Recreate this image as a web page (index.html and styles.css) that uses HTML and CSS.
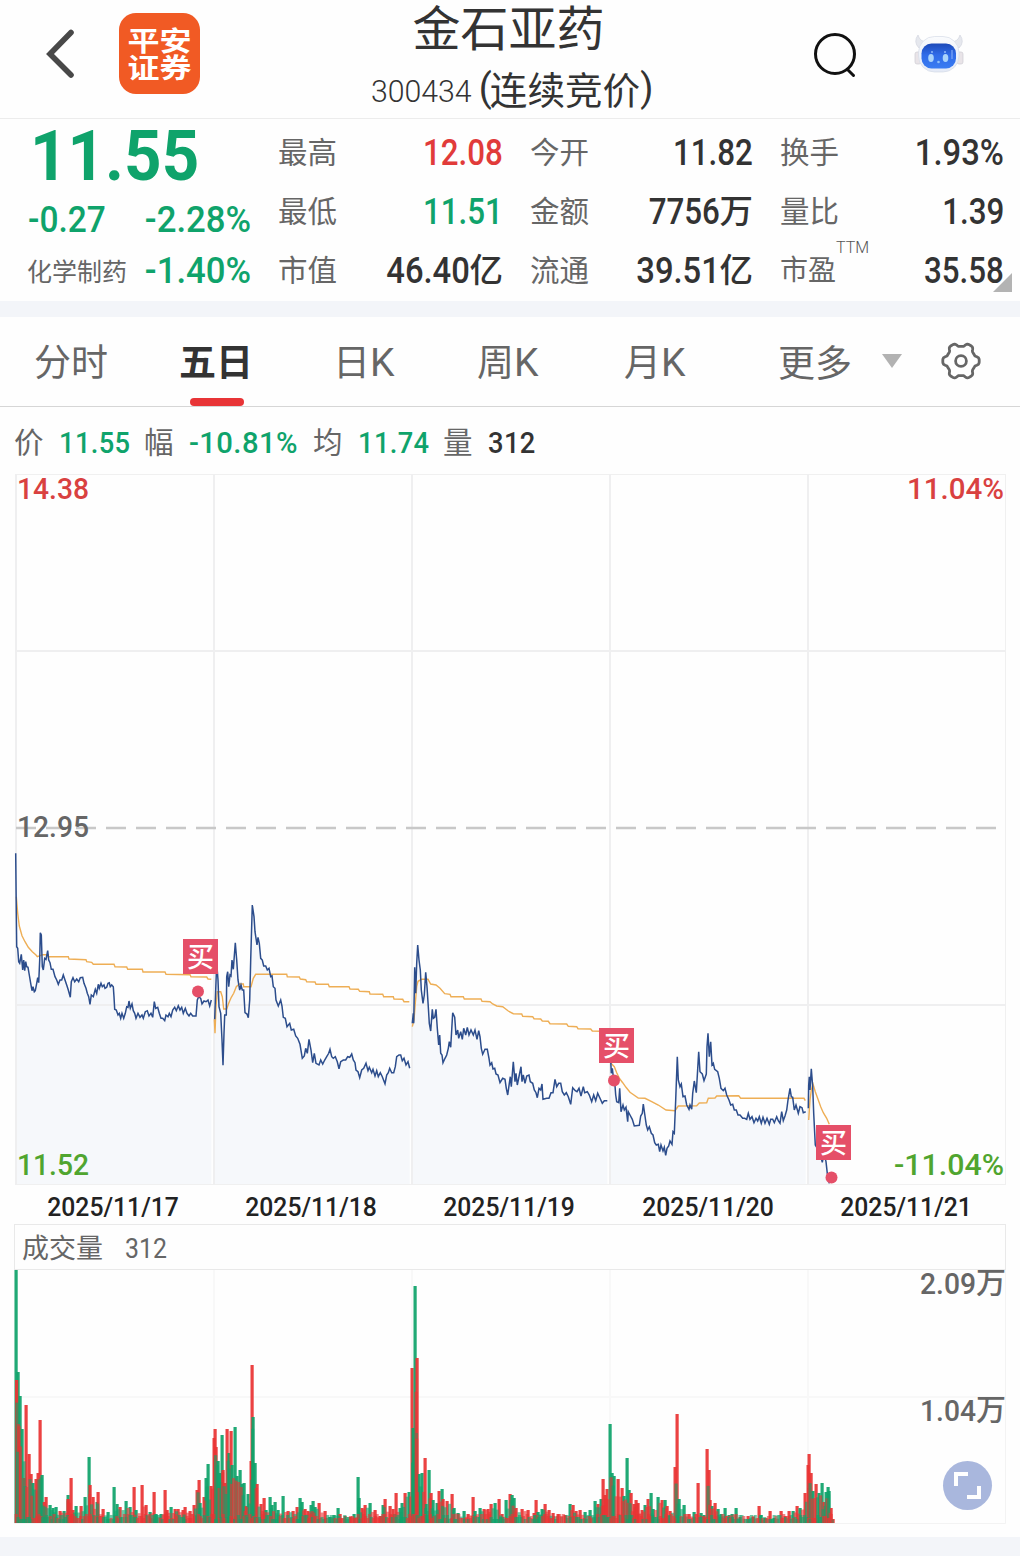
FILE: index.html
```html
<!DOCTYPE html>
<html lang="zh-CN">
<head>
<meta charset="utf-8">
<title>金石亚药 300434</title>
<link rel="stylesheet" href="styles.css">
</head>
<body>
<header class="topbar">
  <div class="topbar-left">
    <svg class="back" width="30" height="52" viewBox="0 0 30 52"><path d="M25 5.500 4 27 25 48" fill="none" stroke="#484848" stroke-width="5.600" stroke-linecap="round" stroke-linejoin="miter"/></svg>
    <div class="logo"><span>平安</span><span>证券</span></div>
  </div>
  <div class="stock">
    <h1>金石亚药</h1>
    <div class="code"><span class="digits">300434</span><span class="paren">(</span><span class="phase">连续竞价</span><span class="paren">)</span></div>
  </div>
  <div class="topbar-right">
    <svg width="44" height="46" viewBox="0 0 44 46" fill="none" stroke="#111" stroke-width="3"><circle cx="22" cy="22" r="19.500"/><path d="m34.500 37.500 6 6" stroke-linecap="round"/></svg>
    <svg class="robot" width="50" height="40" viewBox="0 0 50 40">
      <defs>
        <linearGradient id="face" x1="0" y1="0" x2="0" y2="1"><stop offset="0" stop-color="#1c49b8"/><stop offset=".45" stop-color="#2f6be8"/><stop offset="1" stop-color="#3a7cf2"/></linearGradient>
        <linearGradient id="shell" x1="0" y1="0" x2="0" y2="1"><stop offset="0" stop-color="#fafbfd"/><stop offset="1" stop-color="#e4eaf6"/></linearGradient>
      </defs>
      <path d="M4 1q-5 7 1 13l8-6Q6 8 4 1ZM46 1q5 7-1 13l-8-6q7 0 9-7Z" fill="#e6e8ee" stroke="#d3d6df" stroke-width=".7"/>
      <rect x="1" y="18" width="6" height="12" rx="2" fill="#e9e4e8" stroke="#cfcdd4" stroke-width=".7"/>
      <rect x="43" y="18" width="6" height="12" rx="2" fill="#e9e4e8" stroke="#cfcdd4" stroke-width=".7"/>
      <rect x="4.500" y="2.500" width="40.500" height="35.500" rx="16" fill="url(#shell)" stroke="#d6dbe7" stroke-width=".7"/>
      <rect x="7.500" y="9.500" width="34.500" height="25" rx="10" fill="url(#face)"/>
      <ellipse cx="17" cy="24" rx="2.800" ry="4" fill="#a9d3fb"/><ellipse cx="31.500" cy="24" rx="2.800" ry="4" fill="#a9d3fb"/>
      <circle cx="18" cy="18" r="1" fill="#8fb9f8"/><circle cx="31" cy="18" r="1" fill="#8fb9f8"/>
      <circle cx="24.500" cy="28" r="1.300" fill="#8fc1f8"/>
      <path d="M38 16v9" stroke="#6f9df5" stroke-width="1.500"/>
    </svg>
  </div>
</header>

<section class="quote">
  <div class="main">
    <div class="price green"><span class="num left">11.55</span></div>
    <div class="change green"><span class="num left">-0.27</span><span class="num right">-2.28%</span></div>
    <div class="change green"><span class="sector">化学制药</span><span class="num right">-1.40%</span></div>
  </div>
  <dl class="stats">
    <div><dt>最高</dt><dd class="red"><span class="num right">12.08</span></dd></div>
    <div><dt>今开</dt><dd><span class="num right">11.82</span></dd></div>
    <div><dt>换手</dt><dd><span class="num right wide">1.93%</span></dd></div>
    <div><dt>最低</dt><dd class="green"><span class="num right">11.51</span></dd></div>
    <div><dt>金额</dt><dd><span class="num right">7756</span><b>万</b></dd></div>
    <div><dt>量比</dt><dd><span class="num right">1.39</span></dd></div>
    <div><dt>市值</dt><dd><span class="num right wide">46.40</span><b>亿</b></dd></div>
    <div><dt>流通</dt><dd><span class="num right wide">39.51</span><b>亿</b></dd></div>
    <div class="pe"><dt>市盈<sup>TTM</sup></dt><dd><span class="num right">35.58</span></dd></div>
  </dl>
  <i class="corner"></i>
</section>

<nav class="tabs">
  <a class="tab">分时</a>
  <a class="tab active">五日</a>
  <a class="tab">日<span>K</span></a>
  <a class="tab">周<span>K</span></a>
  <a class="tab">月<span>K</span></a>
  <a class="tab more">更多<i></i></a>
  <svg class="gear" width="40" height="40" viewBox="-20 -20 40 40" fill="none" stroke="#666" stroke-width="2.800" stroke-linejoin="round"><path id="gear"/><circle r="5.400"/></svg>
</nav>

<div class="legend">
  <span class="key">价</span><span class="val v1 green"><span class="num left">11.55</span></span>
  <span class="key">幅</span><span class="val v2 green"><span class="num left">-10.81%</span></span>
  <span class="key">均</span><span class="val v3 green"><span class="num left">11.74</span></span>
  <span class="key">量</span><span class="val"><span class="num left">312</span></span>
</div>

<svg class="chart" id="chart" width="1020" height="711" viewBox="0 474 1020 711">
  <g id="areas" fill="#f6f8fb"></g>
  <path d="M15 474.500H1006M15 1184.500H1006M1005.500 474V1185" stroke="#f0f0f0"/>
  <path d="M15 651H1006M15 1005H1006M16 474V1185M214 474V1185M412 474V1185M610 474V1185M808 474V1185" stroke="#efeff0" stroke-width="2"/>
  <path d="M16 828H1000" stroke="#c8c8c8" stroke-width="2.300" stroke-dasharray="20 10"/>
  <g id="lines" fill="none"></g>
  <g class="axis">
    <text x="17" y="499" textLength="72" lengthAdjust="spacingAndGlyphs" class="up">14.38</text>
    <text x="907" y="499" textLength="97" lengthAdjust="spacingAndGlyphs" class="up">11.04%</text>
    <text x="17" y="837" textLength="72" lengthAdjust="spacingAndGlyphs" class="mid">12.95</text>
    <text x="17" y="1175" textLength="72" lengthAdjust="spacingAndGlyphs" class="down">11.52</text>
    <text x="894" y="1175" textLength="110" lengthAdjust="spacingAndGlyphs" class="down">-11.04%</text>
  </g>
  <g id="trades"></g>
</svg>

<div class="dates"><span>2025/11/17</span><span>2025/11/18</span><span>2025/11/19</span><span>2025/11/20</span><span>2025/11/21</span></div>

<section class="volume">
  <div class="volume-head"><span>成交量</span><span class="count">312</span></div>
  <svg class="chart" width="1020" height="254" viewBox="0 1270 1020 254">
    <path d="M15 1397H1006M214 1270V1523M412 1270V1523M610 1270V1523M808 1270V1523" stroke="#f8f8f8" stroke-width="2"/>
    <path d="M14.500 1270V1523.500H1005.500V1270" fill="none" stroke="#f3f3f3"/>
    <g id="bars"></g>
    <g class="axis">
      <text x="920" y="1294" textLength="56" lengthAdjust="spacingAndGlyphs" class="mid">2.09</text><text x="976" y="1293" class="unit">万</text>
      <text x="920" y="1421" textLength="56" lengthAdjust="spacingAndGlyphs" class="mid">1.04</text><text x="976" y="1420" class="unit">万</text>
    </g>
    <circle cx="967.500" cy="1485.500" r="24.500" fill="#a9b7dd"/>
    <path d="M956 1486v-12h12M979 1486v11h-12" fill="none" stroke="#fff" stroke-width="4"/>
  </svg>
</section>
<footer class="band"></footer>
<script src="chart.js"></script>
</body>
</html>
```
FILE: styles.css
```css
* { box-sizing: border-box; }
body { margin: 0; width: 1020px; height: 1556px; overflow: hidden; display: flex; flex-direction: column; background: #fefefe; color: #333; font-family: Roboto, "Noto Sans CJK SC", sans-serif; }
.green { color: #0fa36b !important; }
.red { color: #e13b3a !important; }
.num { display: inline-block; white-space: nowrap; transform: scaleX(.87); }
.wide { transform: scaleX(.91); }
.left { transform-origin: left; }
.right { transform-origin: right; }

.topbar { height: 119px; flex: none; display: grid; grid-template-columns: 340px 340px 340px; border-bottom: 1px solid #ececec; }
.topbar-left { display: flex; align-items: flex-start; padding: 13px 0 0 46px; }
.back { margin: 14px 43px 0 0; }
.logo { width: 81px; height: 81px; border-radius: 17px; background: #f15a24; color: #fff; display: flex; flex-direction: column; align-items: center; justify-content: center; font: 700 32px/27px "Noto Sans CJK SC", sans-serif; padding-bottom: 2px; }
.logo span { height: 27px; transform: scaleY(.86); }
.stock { display: flex; flex-direction: column; align-items: center; }
h1 { margin: -2px 0 0 -3px; font: 400 48px/54px "Noto Sans CJK SC", sans-serif; white-space: nowrap; }
.code { display: flex; align-items: center; height: 60px; margin: 8px 0 0 2px; }
.digits { font-size: 32px; font-weight: 300; width: 108px; transform: scaleX(.945); transform-origin: left; margin-top: 1px; }
.paren { font-size: 38px; width: 11px; text-align: center; margin-top: -4px; }
.phase { font: 400 37.600px/60px "Noto Sans CJK SC", sans-serif; margin-top: -4px; }
.topbar-right { display: flex; align-items: flex-start; gap: 57px; padding: 32px 0 0 133px; }
.robot { margin-top: 2px; }

.quote { position: relative; height: 182px; flex: none; display: flex; padding: 4px 16px 0 28px; }
.main { width: 250px; display: flex; flex-direction: column; }
.price { height: 66px; font: 700 70px/66px Roboto; padding-left: 2px; }
.price .num { transform: scaleX(.935); }
.change { height: 48px; width: 223px; display: flex; justify-content: space-between; align-items: center; font-size: 36px; line-height: 48px; font-weight: 500; }
.change .left { transform: scaleX(.93); }
.change .right { transform: scaleX(.965); }
.price + .change { height: 58px; padding-top: 3px; }
.sector { font: 400 25px/40px "Noto Sans CJK SC", sans-serif; color: #666; margin: -3px 0 0 -1px; }
.stats { margin: 0; flex: 1; display: grid; grid-template-columns: 225px 223px 224px; column-gap: 27px; grid-auto-rows: 59px; }
.stats > div { display: flex; justify-content: space-between; align-items: center; }
dt { position: relative; font: 400 29.500px/40px "Noto Sans CJK SC", sans-serif; color: #666; margin-top: -6px; }
dd { margin: 0; display: flex; align-items: center; font-size: 36px; font-weight: 500; height: 59px; color: #333; }
dd b { font: 500 33.500px/40px "Noto Sans CJK SC", sans-serif; margin-top: -6px; }
.pe dt { font-size: 28px; }
sup { position: absolute; left: 56px; top: -10px; font: 300 16px/20px Roboto; color: #555; }
.corner { position: absolute; right: 8px; bottom: 9px; border-left: 19px solid transparent; border-bottom: 19px solid #b3b3b3; }

.tabs { height: 106px; flex: none; border-top: 16px solid #f3f5f9; border-bottom: 1px solid #d6d6d6; display: flex; font: 400 37px/86px "Noto Sans CJK SC", sans-serif; color: #666; padding-left: 34px; }
.tab { position: relative; width: 144px; white-space: nowrap; }
.tab:nth-child(1) { width: 145px; }
.tab:nth-child(2) { width: 154px; }
.tab:nth-child(4) { width: 147px; }
.tab:nth-child(5) { width: 154px; }
.tab span { font: 400 39px/86px Roboto; }
.tab.active { font-weight: 700; color: #333; }
.tab.active::after { content: ""; position: absolute; left: 11px; bottom: 0; width: 54px; height: 8px; border-radius: 4px; background: #e83436; }
.tab.more { display: flex; align-items: center; gap: 30px; width: 163px; height: 87px; }
.more i { border: 10.500px solid transparent; border-top: 14px solid #b2b2b2; border-bottom: 0; }
.gear { margin-top: 24px; }

.legend { height: 67px; flex: none; display: flex; align-items: center; padding: 3px 0 0 14px; }
.key { font: 400 29.500px/40px "Noto Sans CJK SC", sans-serif; color: #666; margin-top: -4px; width: 45px; }
.val { font-size: 30px; font-weight: 500; letter-spacing: .4px; width: 85px; }
.val .num { transform: scaleX(.91); }
.v2 { width: 124px; }
.v2 .num { transform: scaleX(.975); }

.chart { display: block; flex: none; overflow: visible; }
.axis text { font: 500 30px Roboto; }
.axis .up { fill: #d94140; }
.axis .mid { fill: #666; }
.axis .down { fill: #50a52f; }
.axis .unit { font: 500 30px "Noto Sans CJK SC", sans-serif; fill: #666; }
.mark { font: 500 27px "Noto Sans CJK SC", sans-serif; fill: #fff; }
.dates { height: 39px; flex: none; display: grid; grid-template-columns: repeat(5, 198.200px); margin-left: 14px; font: 500 26px/44px Roboto; color: #222; text-align: center; }
.dates span { transform: scaleX(.95); }
.volume { flex: none; }
.volume-head { height: 46px; margin: 0 14px; border: 1px solid #e9e9e9; display: flex; align-items: center; gap: 22px; padding: 0 0 0 7px; color: #666; font: 400 27px/40px "Noto Sans CJK SC", sans-serif; }
.count { font: 400 27px/40px Roboto; transform: scaleX(.92); transform-origin: left; margin-top: 3px; }
.band { margin-top: 13px; flex: 1; background: #f3f5f9; }
```
FILE: chart.js
```javascript
const NS = 'http://www.w3.org/2000/svg';
function add(parent, tag, attrs, text) {
  const el = document.createElementNS(NS, tag);
  for (const k in attrs) el.setAttribute(k, attrs[k]);
  if (text) el.textContent = text;
  document.getElementById(parent).appendChild(el);
}

// Each session: origin of its grid and samples in thirds of a pixel.
const sessions = [
  { x: 0, y: 800,
    price: '47,160 49,340 50,440 53,445 56,485 59,490 64,463 68,510 71,480 74,512 77,485 80,500 84,502 88,525 92,550 96,572 99,560 103,575 106,572 110,550 113,533 116,548 119,480 121,398 124,405 127,500 130,510 134,475 138,478 143,452 146,480 150,488 154,508 159,508 165,530 170,540 175,553 180,540 185,540 190,525 195,540 200,555 205,570 211,592 214,545 219,533 224,545 230,537 236,545 241,533 248,532 252,550 258,565 262,580 266,590 270,613 274,585 280,590 286,568 290,580 295,553 298,565 303,550 307,560 312,555 315,565 320,562 324,550 328,548 331,560 335,555 340,560 342,590 344,628 349,630 354,645 358,640 362,655 366,640 371,655 376,640 380,620 384,622 387,603 391,625 396,612 400,632 404,640 408,655 414,640 420,652 426,645 430,655 436,635 442,632 447,648 453,640 458,652 463,605 467,625 473,622 478,640 483,655 488,655 494,662 498,645 504,650 508,640 513,650 518,630 524,622 529,632 535,617 540,630 545,622 550,640 556,625 561,640 567,648 572,640 578,648 588,648 592,600 596,590 602,595 606,612 612,603 618,605 624,600 629,618 634,600',
    avg: '49,290 53,340 58,378 66,407 75,425 85,442 97,455 108,465 112,470 128,464 145,464 145,470 205,470 207,477 258,479 260,485 275,487 280,493 342,493 345,500 380,501 383,508 427,508 429,516 495,516 498,523 570,524 573,530 620,531 624,537 634,538' },
  { x: 200, y: 880,
    price: '44,418 47,330 50,248 54,300 57,380 62,400 66,480 69,556 72,460 74,405 79,405 80,290 83,275 86,320 90,285 93,288 96,240 100,268 106,188 110,240 114,300 119,330 123,315 127,330 131,330 135,398 141,402 145,413 149,360 152,240 157,75 162,110 165,155 171,195 174,172 178,190 182,235 187,240 191,258 197,258 202,270 207,265 212,290 216,288 220,320 225,325 228,360 235,378 242,360 246,378 250,412 256,415 261,440 269,430 274,450 281,448 287,468 293,475 300,493 307,535 313,528 317,505 322,520 327,478 333,510 338,548 343,520 348,550 357,555 362,540 368,552 374,540 380,530 386,520 390,508 395,530 400,535 406,530 412,545 417,566 422,545 430,540 437,540 443,530 449,532 455,522 460,540 465,548 468,570 474,575 479,593 485,570 491,565 498,550 504,572 508,562 515,578 519,568 525,588 530,572 535,590 541,578 547,590 555,611 560,585 565,578 569,565 575,578 581,578 586,560 590,530 597,525 602,525 607,542 612,535 618,555 624,545 629,565',
    avg: '43,418 45,460 48,380 52,335 62,335 67,350 71,387 80,387 86,370 94,352 101,340 109,320 118,312 130,312 131,320 153,320 160,295 167,283 260,283 262,290 298,291 301,297 317,299 320,305 345,306 348,313 385,313 388,320 447,320 450,327 475,328 479,334 508,335 510,342 548,343 551,350 580,350 582,357 608,358 612,365 628,365' },
  { x: 400, y: 920,
    price: '37,310 40,280 41,310 44,142 47,220 50,130 53,75 57,120 61,150 64,210 69,250 73,225 77,157 81,200 85,260 88,310 92,333 97,268 100,295 104,292 108,268 112,325 116,375 119,345 122,400 126,405 129,428 135,415 140,405 145,385 148,365 152,382 155,330 158,278 164,292 168,345 173,330 176,355 182,335 187,358 191,325 197,345 202,322 207,345 213,330 220,345 225,330 231,358 236,332 240,350 244,385 248,403 255,388 262,388 267,415 270,435 275,428 279,447 284,445 288,462 294,465 300,488 308,475 315,478 319,505 323,525 328,490 331,470 334,500 340,425 345,485 348,460 352,495 358,465 363,440 366,485 370,465 375,490 380,468 387,465 391,485 398,490 403,510 408,518 412,533 417,505 422,510 426,492 429,538 440,535 447,535 453,518 459,518 465,478 470,500 476,490 482,490 487,515 493,525 499,518 505,530 512,553 518,503 526,512 531,515 537,505 543,528 550,500 554,518 562,515 568,525 575,545 581,525 587,542 593,520 600,535 607,550 613,542 622,542',
    avg: '37,320 42,300 46,250 50,200 54,184 65,178 84,178 92,192 108,195 120,205 134,221 150,223 153,230 190,230 193,237 243,237 246,244 270,245 278,252 290,258 308,260 325,273 340,281 365,282 368,289 398,290 402,296 422,297 427,303 445,304 450,311 500,312 505,319 530,320 534,326 572,327 577,333 610,334' },
  { x: 590, y: 1010,
    price: '62,150 64,190 67,175 70,200 74,215 77,255 80,275 86,278 89,235 93,305 99,285 103,300 108,292 113,335 115,305 120,315 127,328 133,348 148,346 152,318 157,310 160,282 164,312 169,345 173,360 178,350 184,370 189,375 194,398 199,405 205,403 209,425 213,405 219,423 223,412 227,436 231,415 236,408 240,393 246,403 249,365 253,370 257,270 262,140 265,210 270,230 274,222 279,260 285,258 290,285 297,298 300,285 305,298 308,250 313,213 319,248 326,125 330,185 337,192 342,212 349,192 351,110 354,70 358,140 362,95 366,165 370,160 374,178 383,185 388,205 393,235 400,242 405,235 410,255 417,270 422,285 428,283 433,300 439,300 444,315 450,315 458,325 464,325 470,328 475,310 480,328 486,320 492,338 498,325 503,333 508,320 514,340 519,322 525,340 531,325 538,343 542,328 548,328 553,338 560,320 565,332 570,340 575,305 580,332 585,318 590,300 594,270 600,235 604,260 608,262 613,300 618,285 625,310 630,290 636,293 640,308 647,305',
    avg: '63,160 73,170 80,188 88,205 98,218 108,232 120,247 145,264 165,265 185,275 205,285 228,300 255,302 265,288 320,287 328,279 350,278 355,265 375,264 380,258 446,257 452,265 642,265 646,272' },
  { x: 590, y: 1010,
    price: '655,295 656,225 658,200 660,240 664,176 668,230 671,310 674,370 676,405 682,415 690,430 697,457 702,430 708,455 712,490 718,520',
    avg: '656,330 660,270 664,240 669,222 676,245 684,268 692,290 700,308 710,325 718,343' }
];
for (const s of sessions) {
  const pts = str => str.split(' ').map(p => p.split(',').map(Number)).map(([a, b]) => [(s.x + a / 3).toFixed(1), (s.y + b / 3).toFixed(1)]);
  const p = pts(s.price);
  add('areas', 'polygon', { points: [[p[0][0], 1184], ...p, [p[p.length - 1][0], 1184]].join(' ') });
  add('lines', 'polyline', { points: pts(s.avg).join(' '), stroke: '#eeae55', 'stroke-width': 1.4 });
  add('lines', 'polyline', { points: p.join(' '), stroke: '#2c4d8c', 'stroke-width': 1.5 });
}

// Buy markers: label box corner and trade point.
for (const [bx, by, cx, cy] of [[183, 939, 198, 991.5], [599, 1028, 614, 1080.5], [816, 1125, 831.5, 1177.5]]) {
  add('trades', 'circle', { cx, cy, r: 6, fill: '#e54f68' });
  add('trades', 'rect', { x: bx, y: by, width: 35, height: 35, fill: '#e54f68' });
  add('trades', 'text', { x: bx + 4, y: by + 28, class: 'mark' }, '买');
}

// Volume bars: x, height, r (up) or g (down).
const volume = '16 253g 18 151g 20 127g 16.5 143r 18.500 83r 22 94g 26 118r 24 45r 29 69r 31 49r 33 40g 36 44r 38 50r 40 103r 42 48g 44 21r 46 26r 50 18g 53 15g 56 16g 60 12r 64 12g 68 28g 68 24r 71 45r 73 13r 76 17g 81 17r 85 26g 89 66g 90 38r 93 26r 97 21g 98 31r 103 14r 108 11g 114 36g 117 19g 120 16r 126 22g 130 16g 134 36r 136 13g 142 38r 146 18r 150 11g 154 31r 156 9g 161 9g 165 33r 167 13r 171 16g 175 14r 178 14r 183 13r 185 16r 190 12r 194 18r 197 33r 199 43r 200 20g 204 26r 206 45g 208 59g 211 37r 214 85r 215 94r 216 76r 218 62g 220 50g 222 88g 223 53r 225 40r 227 94r 229 70g 231 92r 232 58g 235 96g 237 47g 240 53g 242 39g 244 40g 246 17r 248 29g 251 62r 252 158r 253 106g 255 60g 257 39r 261 19r 264 25r 266 13g 270 26g 272 18g 275 21g 278 13g 283 27g 288 12r 293 12r 297 16r 300 25g 302 21g 305 14r 308 12r 311 18g 313 22g 315 16g 319 20r 325 12r 330 6g 334 8g 338 15g 340 9r 345 7r 350 6r 354 9g 358 46g 359 25g 362 15r 365 18r 370 20g 375 13r 380 7r 383 18g 385 24r 390 17r 393 14r 396 30r 400 15g 402 20g 405 30r 409 31g 412 155r 413 95g 415 237g 417 165r 416 90g 419 49g 422 50g 425 65r 426 19g 429 53g 431 30r 433 23g 437 20g 439 32r 442 34g 443 24r 447 22r 452 29r 454 15g 458 10g 464 12g 468 9r 473 26r 475 12g 480 15g 484 14r 488 14r 491 19r 495 20g 499 24r 502 9r 506 23g 510 29r 512 28g 514 25g 516 15r 522 14r 528 13r 534 10r 536 23r 538 11g 542 14g 545 19r 549 13r 553 10r 558 9r 565 8r 570 19g 573 18r 576 12r 580 13r 585 11g 590 13g 595 22g 598 19r 601 24g 603 44r 605 28r 607 34r 610 99g 612 50g 614 47g 618 44r 622 35r 624 27g 627 65g 629 33g 631 30r 634 19r 636 23r 638 20r 642 13r 645 18g 648 24r 651 30g 653 14g 658 26g 662 23r 665 23g 667 17r 670 12r 675 56r 677 109r 679 24g 684 18g 689 9r 694 11g 698 40r 701 10g 704 8g 707 74r 709 53r 710 23r 712 17g 715 20r 718 14g 721 9g 725 15g 729 8g 732 9g 736 15g 740 6r 748 7r 753 6r 759 17r 761 8g 765 5g 770 12r 774 5g 781 12r 785 7r 789 12r 793 12g 797 17r 800 15g 805 30r 808 58r 809 69r 811 50r 813 32g 816 39r 819 30g 822 40g 824 21r 826 31g 828 36g 829 32g 831 15r 833 4r';
const bars = volume.match(/[\d.]+ [\d.]+[rg]/g).map(t => [parseFloat(t), parseFloat(t.split(' ')[1]), t.slice(-1)]);
const bar = (x, h, c, o) => add('bars', 'rect', { x: (x - 1.5).toFixed(1), y: 1523 - h, width: 3.2, height: h, fill: c === 'r' ? '#e93434' : '#0fa36b', opacity: o });
for (const [x, h, c] of bars) bar(x, h, c, .93);
// Quiet minutes between the larger trades.
let seed = 7;
for (let i = 1; i < bars.length; i++) {
  seed = (seed * 73 + 41) % 997;
  const h = Math.min(bars[i - 1][1], bars[i][1]) * (.6 + seed / 2800);
  const x = (bars[i - 1][0] + bars[i][0]) / 2;
  bar(x, h, seed % 2 ? 'r' : 'g', .6);
}
for (let x = 16; x < 832; x += 1.9) {
  seed = (seed * 73 + 41) % 997;
  bar(x, 4 + seed % 6, seed % 2 ? 'r' : 'g', .6);
}

// Gear outline with six rounded teeth.
let d = '';
for (let a = 0; a < 360; a += 3) {
  const t = a * Math.PI / 180;
  const r = 16.4 + 1.9 * Math.tanh(2 * Math.cos(6 * t));
  d += (a ? 'L' : 'M') + (r * Math.cos(t)).toFixed(1) + ' ' + (r * Math.sin(t)).toFixed(1);
}
document.getElementById('gear').setAttribute('d', d + 'Z');
```
